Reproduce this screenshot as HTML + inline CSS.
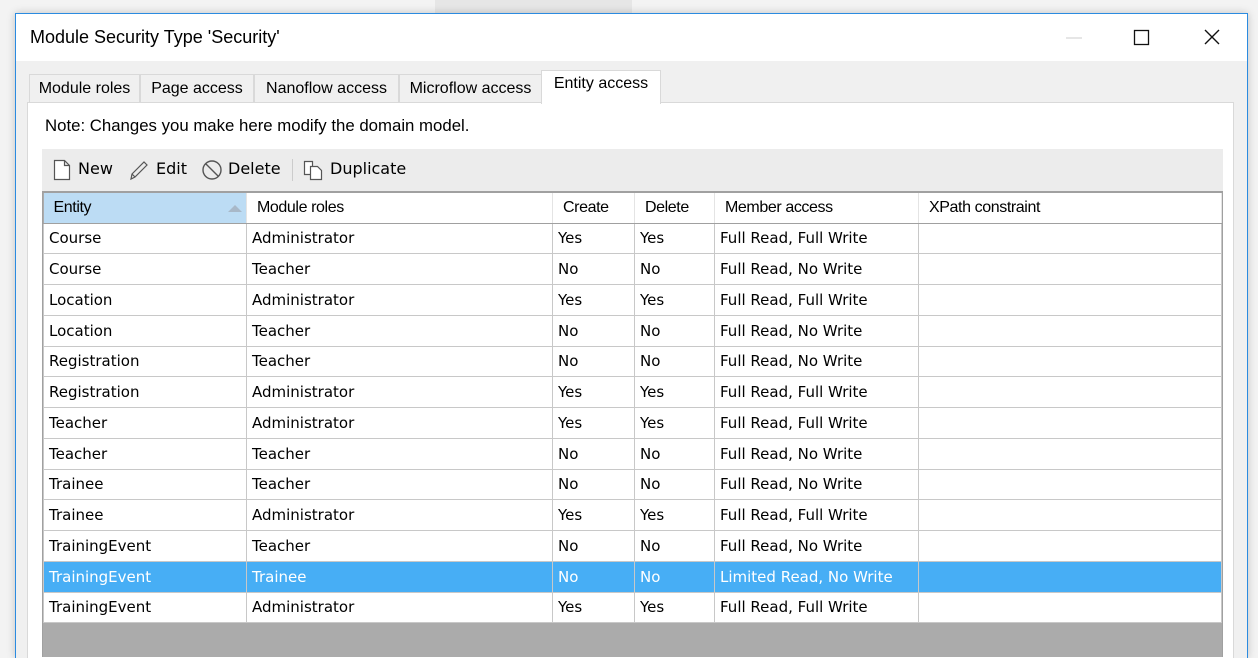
<!DOCTYPE html>
<html style="overflow:hidden;width:1258px;height:658px"><head><style>
*{box-sizing:border-box;margin:0;padding:0}
body{width:1258px;height:658px;background:#f3f3f3;position:relative;overflow:hidden;font-family:"Liberation Sans",sans-serif;color:#000}
.topblk{position:absolute;left:435px;top:0;width:197px;height:13px;background:#e6e6e6}
.win{position:absolute;left:15px;top:13px;width:1233px;height:645px;border:1px solid #2b8be0;border-bottom:none;background:#f0f0f0;box-shadow:0 0 8px rgba(0,0,0,.2);overflow:hidden}
.title{height:47px;background:#fff;position:relative}
.title span{position:absolute;left:14px;top:13px;font-size:18px}
.ctl{position:absolute;top:0}
.tab{position:absolute;top:60px;height:29px;border:1px solid #d9d9d9;border-bottom:none;background:#f0f0f0;font-size:16px;padding-top:5px;text-align:center}
.tab.act{top:56px;height:34px;background:#fff;padding-top:4px;z-index:2}
.panel{position:absolute;left:11px;top:88px;width:1207px;height:556px;background:#fff;border:1px solid #d9d9d9;border-bottom:none}
.note{position:absolute;left:29px;top:102px;font-size:16.8px}
.tb{position:absolute;left:26px;top:135px;width:1181px;height:42px;background:#ececec;font-family:"DejaVu Sans",sans-serif;font-size:16px}
.tb span{position:absolute;top:10px}
.grid{position:absolute;left:26px;top:177px;width:1181px;height:466px;background:#ababab;border:1px solid #a0a0a0;border-top:2px solid #a0a0a0;border-bottom:none;overflow:hidden}
table{border-collapse:collapse;width:1179px;table-layout:fixed}
td{height:30.75px;border:1px solid #c8c8c8;border-top:none;background:#fff;font-family:"DejaVu Sans",sans-serif;font-size:15px;padding-left:5px;white-space:nowrap;overflow:hidden}
th{height:30px;font-weight:normal;text-align:left;font-size:16px;padding-left:10px;background:#fff;border-right:1px solid #e4e4e4;border-bottom:1px solid #a0a0a0;letter-spacing:-.4px}
th.s{background:#bcdcf4;position:relative}
tr.sel td{background:#47aef5;color:#fff}
</style></head><body>
<div class="topblk"></div>
<div class="win">
 <div class="title"><span>Module Security Type 'Security'</span>
  <svg class="ctl" style="left:1040px" width="200" height="47">
   <line x1="10" y1="24" x2="26" y2="24" stroke="#ccc" stroke-width="1"/>
   <rect x="78.5" y="16.5" width="14" height="14" fill="none" stroke="#111" stroke-width="1.3"/>
   <path d="M149 16 L163 30 M163 16 L149 30" stroke="#111" stroke-width="1.4"/>
  </svg>
 </div>
 <div class="tab" style="left:13px;width:111px">Module roles</div>
 <div class="tab" style="left:124px;width:114px">Page access</div>
 <div class="tab" style="left:238px;width:145px">Nanoflow access</div>
 <div class="tab" style="left:383px;width:143px">Microflow access</div>
 <div class="tab act" style="left:525px;width:120px">Entity access</div>
 <div class="panel"></div>
 <div class="note">Note: Changes you make here modify the domain model.</div>
 <div class="tb">
  <svg style="position:absolute;left:10px;top:9px" width="20" height="24"><path d="M2.5 2.5h10l5 5v14h-15z M12.5 2.5v5h5" fill="#fff" stroke="#555" stroke-width="1.2"/></svg>
  <span style="left:36px">New</span>
  <svg style="position:absolute;left:86px;top:10px" width="22" height="22"><path d="M3 20 L4 15 L16 3 L19 6 L7 18 Z M4 15 L7 18" fill="none" stroke="#555" stroke-width="1.2"/></svg>
  <span style="left:114px">Edit</span>
  <svg style="position:absolute;left:159px;top:10px" width="22" height="22"><circle cx="11" cy="11" r="9" fill="none" stroke="#555" stroke-width="1.4"/><path d="M4.6 4.6 L17.4 17.4" stroke="#555" stroke-width="1.4"/></svg>
  <span style="left:186px">Delete</span>
  <div style="position:absolute;left:250px;top:10px;width:1px;height:22px;background:#ccc"></div>
  <svg style="position:absolute;left:260px;top:9px" width="24" height="24"><path d="M2.5 3.5h8v13h-8z" fill="#fff" stroke="#555" stroke-width="1.2"/><path d="M8.5 8.5h7l4 4v9h-11z" fill="#fff" stroke="#555" stroke-width="1.2"/></svg>
  <span style="left:288px">Duplicate</span>
 </div>
 <div class="grid">
 <table>
  <colgroup><col style="width:203px"><col style="width:306px"><col style="width:82px"><col style="width:80px"><col style="width:204px"><col></colgroup>
  <tr><th class="s">Entity<svg style="position:absolute;right:4px;top:12px" width="14" height="8"><path d="M0 7L7 0L14 7Z" fill="#a8b8c8"/></svg></th><th>Module roles</th><th>Create</th><th>Delete</th><th>Member access</th><th>XPath constraint</th></tr>
  <tr><td>Course</td><td>Administrator</td><td>Yes</td><td>Yes</td><td>Full Read, Full Write</td><td></td></tr>
  <tr><td>Course</td><td>Teacher</td><td>No</td><td>No</td><td>Full Read, No Write</td><td></td></tr>
  <tr><td>Location</td><td>Administrator</td><td>Yes</td><td>Yes</td><td>Full Read, Full Write</td><td></td></tr>
  <tr><td>Location</td><td>Teacher</td><td>No</td><td>No</td><td>Full Read, No Write</td><td></td></tr>
  <tr><td>Registration</td><td>Teacher</td><td>No</td><td>No</td><td>Full Read, No Write</td><td></td></tr>
  <tr><td>Registration</td><td>Administrator</td><td>Yes</td><td>Yes</td><td>Full Read, Full Write</td><td></td></tr>
  <tr><td>Teacher</td><td>Administrator</td><td>Yes</td><td>Yes</td><td>Full Read, Full Write</td><td></td></tr>
  <tr><td>Teacher</td><td>Teacher</td><td>No</td><td>No</td><td>Full Read, No Write</td><td></td></tr>
  <tr><td>Trainee</td><td>Teacher</td><td>No</td><td>No</td><td>Full Read, No Write</td><td></td></tr>
  <tr><td>Trainee</td><td>Administrator</td><td>Yes</td><td>Yes</td><td>Full Read, Full Write</td><td></td></tr>
  <tr><td>TrainingEvent</td><td>Teacher</td><td>No</td><td>No</td><td>Full Read, No Write</td><td></td></tr>
  <tr class="sel"><td>TrainingEvent</td><td>Trainee</td><td>No</td><td>No</td><td>Limited Read, No Write</td><td></td></tr>
  <tr><td>TrainingEvent</td><td>Administrator</td><td>Yes</td><td>Yes</td><td>Full Read, Full Write</td><td></td></tr>
 </table>
 </div>
</div>
</body></html>
